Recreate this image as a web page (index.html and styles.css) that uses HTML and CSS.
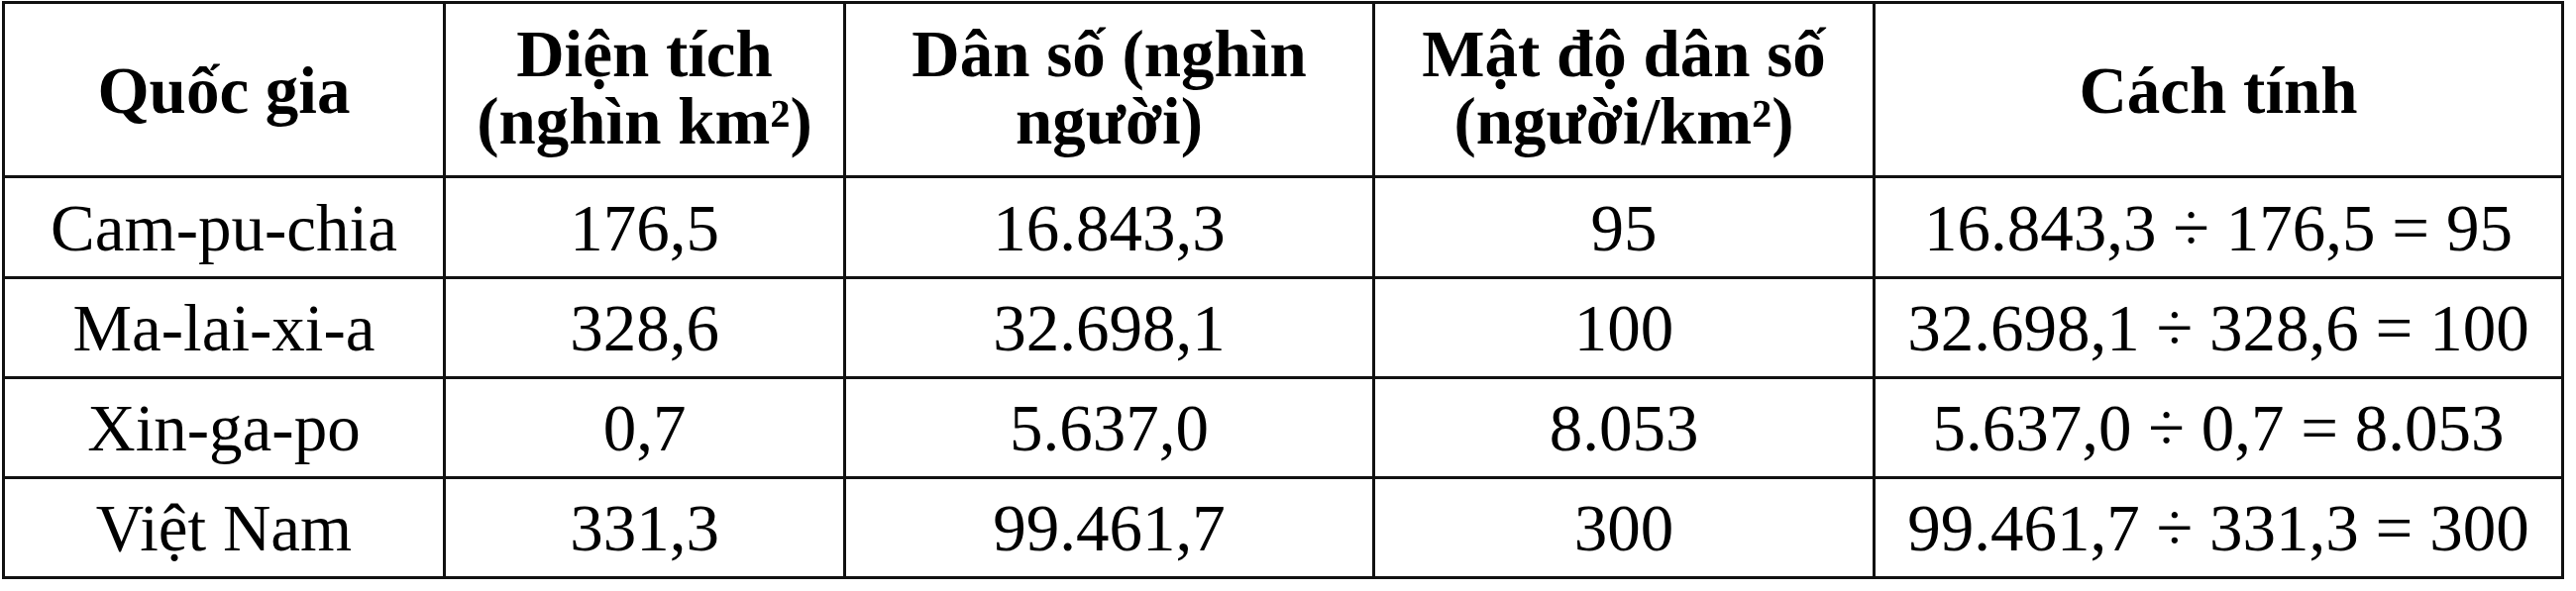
FILE: index.html
```html
<!DOCTYPE html>
<html lang="vi">
<head>
<meta charset="utf-8">
<title>Mật độ dân số</title>
<link rel="stylesheet" href="styles.css">
</head>
<body>
<table class="data">
  <colgroup>
    <col class="c1"><col class="c2"><col class="c3"><col class="c4"><col class="c5">
  </colgroup>
  <thead>
    <tr class="head">
      <th>Quốc gia</th>
      <th><span class="two">Diện tích<br>(nghìn km²)</span></th>
      <th><span class="two">Dân số (nghìn<br>người)</span></th>
      <th><span class="two">Mật độ dân số<br>(người/km²)</span></th>
      <th>Cách tính</th>
    </tr>
  </thead>
  <tbody>
    <tr class="r1">
      <td>Cam-pu-chia</td><td>176,5</td><td>16.843,3</td><td>95</td><td>16.843,3 ÷ 176,5 = 95</td>
    </tr>
    <tr class="r2">
      <td>Ma-lai-xi-a</td><td>328,6</td><td>32.698,1</td><td>100</td><td>32.698,1 ÷ 328,6 = 100</td>
    </tr>
    <tr class="r2">
      <td>Xin-ga-po</td><td>0,7</td><td>5.637,0</td><td>8.053</td><td>5.637,0 ÷ 0,7 = 8.053</td>
    </tr>
    <tr class="r2">
      <td>Việt Nam</td><td>331,3</td><td>99.461,7</td><td>300</td><td>99.461,7 ÷ 331,3 = 300</td>
    </tr>
  </tbody>
</table>
</body>
</html>
```

FILE: styles.css
```css
html, body {
  margin: 0;
  padding: 0;
  background: #ffffff;
}

body {
  padding: 1px 0 0 2px;
  font-family: "Liberation Serif", "Times New Roman", serif;
  color: #000;
}

.data {
  table-layout: fixed;
  border-collapse: separate;
  border-spacing: 0;
  width: 2586px;
  border-top: 3px solid #111;
  border-left: 3px solid #111;
}

.c1 { width: 445px; }
.c2 { width: 404px; }
.c3 { width: 534px; }
.c4 { width: 505px; }
.c5 { width: 695px; }

.data th,
.data td {
  box-sizing: border-box;
  padding: 0;
  border-right: 3px solid #111;
  border-bottom: 3px solid #111;
  text-align: center;
  vertical-align: middle;
  font-size: 67px;
  line-height: 70px;
}

.data th {
  font-weight: bold;
}

.data td {
  font-weight: normal;
}

.two {
  display: inline-block;
  line-height: 68px;
  margin-bottom: 6px;
}

.head { height: 176px; }
.r1 { height: 102px; }
.r2 { height: 101px; }
```
